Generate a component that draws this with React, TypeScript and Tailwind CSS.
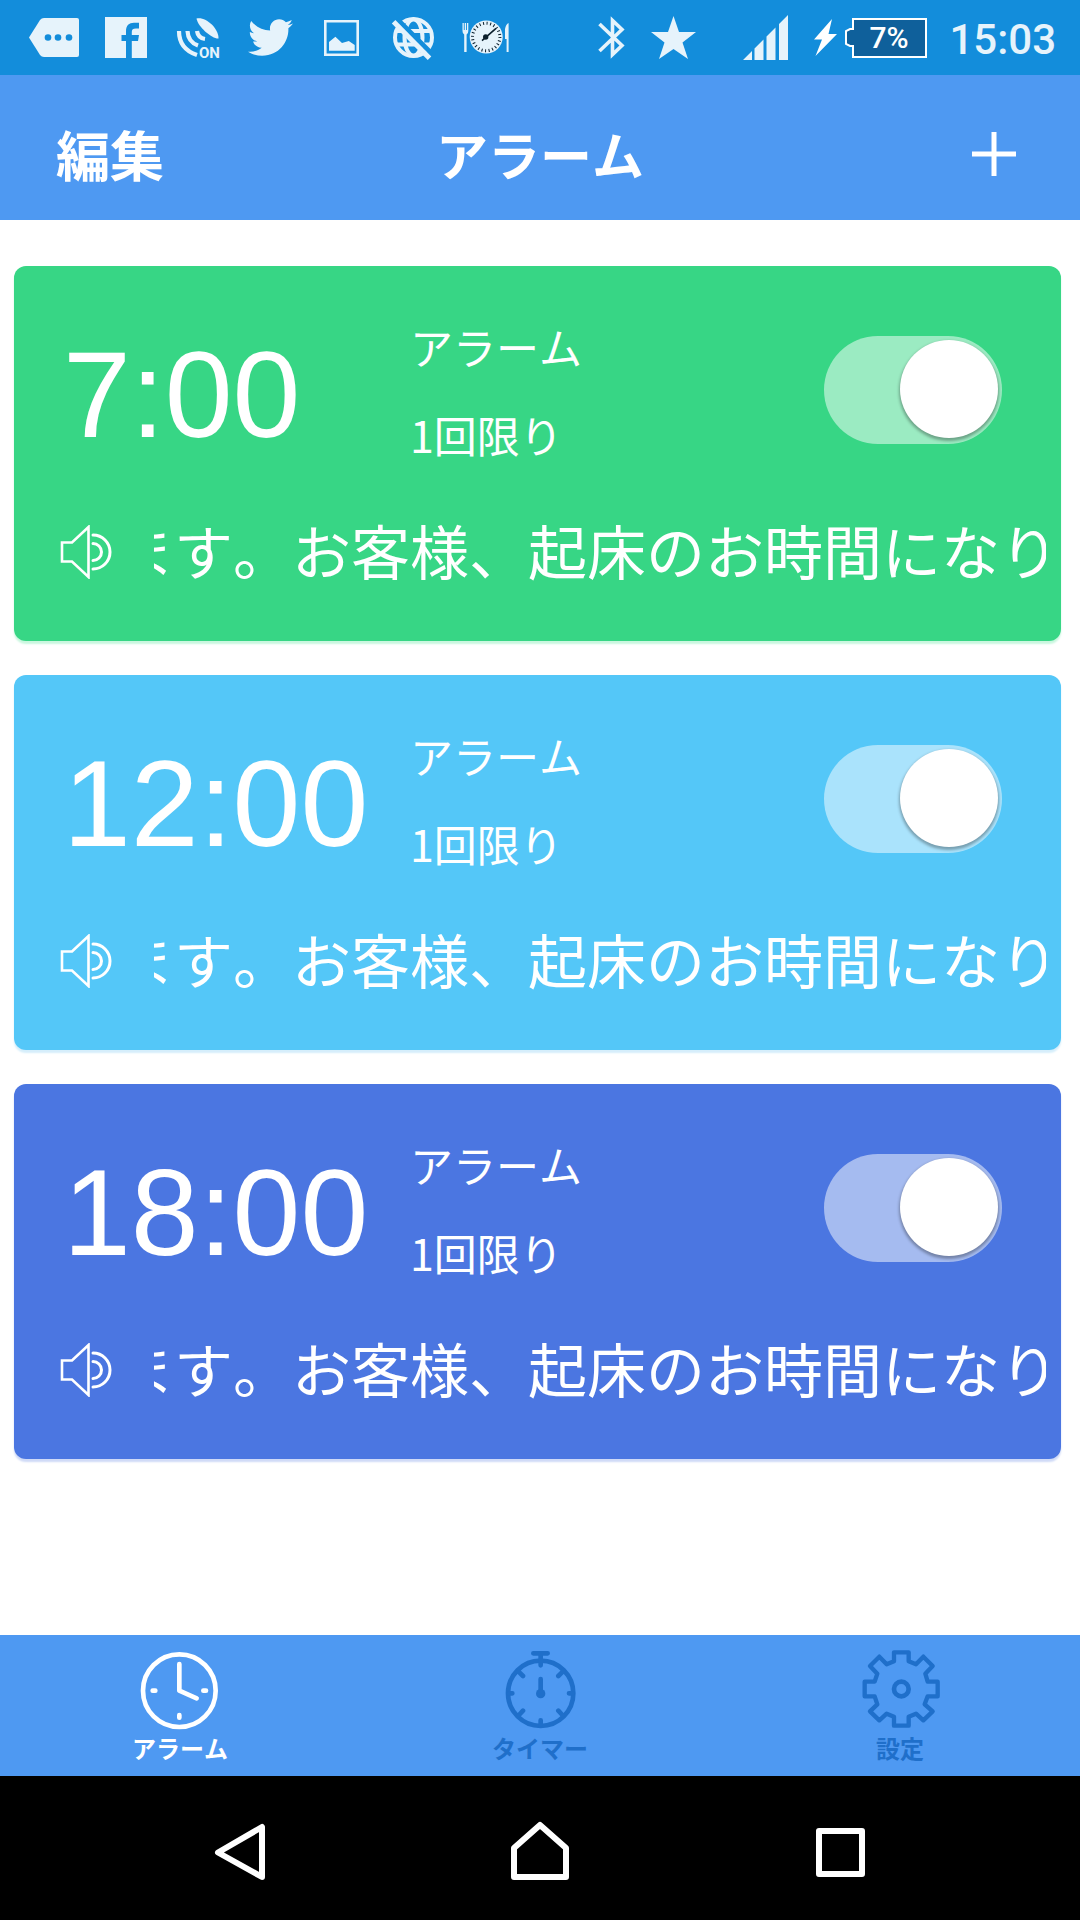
import React, { useState } from "react";
import { FaTwitter } from "react-icons/fa";

const message = "ます。お客様、起床のお時間になります。";

const initialAlarms = [
  { id: 1, time: "7:00", name: "アラーム", repeat: "1回限り", color: "bg-[#37d685] shadow-[0_3px_2px_#c9f7df]", on: true },
  { id: 2, time: "12:00", name: "アラーム", repeat: "1回限り", color: "bg-[#54c7f8] shadow-[0_3px_2px_#d5eefb]", on: true },
  { id: 3, time: "18:00", name: "アラーム", repeat: "1回限り", color: "bg-[#4b76e1] shadow-[0_3px_2px_#cfdaf7]", on: true },
];

const StatusBar = () => (
  <div className="flex h-[75px] items-center bg-[#138ddb] pr-[24px] pl-[18px] font-[Roboto,sans-serif] text-[#e6f3fb]">
    <svg className="h-[51px] w-[72px]" viewBox="0 0 72 51" fill="currentColor">
      <path d="M11 25.500 22 8Q23.500 6 26 6H59Q61 6 61 8V43Q61 45 59 45H26Q23.500 45 22 43Z" />
      <g fill="#138ddb">
        <circle cx="30" cy="25.500" r="3.300" />
        <circle cx="40" cy="25.500" r="3.300" />
        <circle cx="51" cy="25.500" r="3.300" />
      </g>
    </svg>
    <svg className="h-[51px] w-[72px]" viewBox="0 0 72 51" fill="currentColor">
      <path d="M15 5H57V46H15Z" />
      <path fill="#138ddb" d="M36 46V29H31.500V23H36V19.500C36 13.500 39 10.800 44 10.800H49V16.500H46C43 16.500 41.800 17.500 41.800 20V23H49L48 29H41.800V46Z" />
    </svg>
    <svg className="h-[51px] w-[72px]" viewBox="0 0 72 51" fill="currentColor">
      <path d="M34.500 6.500C43 4 57 16 56.500 26.500C50 27 36 15 34.500 6.500Z" />
      <g fill="none" stroke="currentColor" strokeWidth="4.200">
        <path d="M35 19Q36 26 43 27" />
        <path d="M25.500 19Q26 30 36 33.500" />
        <path d="M17 19Q17 37 35 43" />
      </g>
      <text x="37" y="46" fontSize="15" fontWeight="700">ON</text>
    </svg>
    <div className="flex w-[72px] justify-center">
      <FaTwitter size={45} />
    </div>
    <svg className="h-[51px] w-[72px]" viewBox="0 0 72 51" fill="currentColor">
      <path d="M19.300 9.300H51.700V42.700H19.300Z" fill="none" stroke="currentColor" strokeWidth="2.600" />
      <path d="M23 38.700V30L29.400 24.700 36 31 42.800 29 48.700 33V38.700Z" />
    </svg>
    <svg className="h-[51px] w-[72px]" viewBox="0 0 72 51">
      <g fill="none" stroke="currentColor" strokeWidth="4">
        <circle cx="35.500" cy="25.500" r="18.500" />
        <ellipse cx="35.500" cy="25.500" rx="9" ry="18" />
        <path d="M18 19H53M18 32.500H53" />
      </g>
      <path d="M19 7 56 44" stroke="#138ddb" strokeWidth="5" />
      <path d="M15.600 9.700 51.500 46.300" stroke="currentColor" strokeWidth="5" />
    </svg>
    <svg className="h-[51px] w-[72px]" viewBox="0 0 72 51" fill="currentColor">
      <path d="M12.500 11V19Q12.500 22 14.200 22.500V40H16.600V22.500Q18.300 22 18.300 19V11H17V18H16.100V11H14.700V18H13.800V11Z" />
      <path d="M58.600 11V40H56.600V27H55V17Q56 12 58.600 11Z" />
      <circle cx="36.200" cy="25" r="16.500" />
      <circle cx="36.200" cy="25" r="13.700" fill="none" stroke="#0a1e2c" strokeWidth="3" strokeDasharray="1 2.586" />
      <path d="M32 28.700 46 16.300" stroke="#0a1e2c" strokeWidth="1.600" />
      <circle cx="35.700" cy="25" r="2.700" fill="#0a1e2c" />
    </svg>

    <svg className="ml-auto h-[43px] w-[27px]" viewBox="0 0 27 43" fill="none" stroke="currentColor" strokeWidth="3.600">
      <path d="M1.500 8 24 29.500 14.500 38.500V4.500L24 13.500 1.500 35" />
    </svg>
    <svg className="ml-[26px] h-[43px] w-[45px]" viewBox="0 0 45 43" fill="currentColor">
      <path d="M22.500 0 28 16H45L31.500 26.500 37 43 22.500 33 8 43 13.500 26.500 0 16H17Z" />
    </svg>
    <svg className="ml-[47px] h-[45px] w-[45px]" viewBox="0 0 45 45" fill="currentColor">
      <path d="M0 45 9 36V45ZM11.500 33.500 20.500 24.500V45H11.500ZM23.500 21.500 32.500 12.500V45H23.500ZM36 9 45 0V45H36Z" />
    </svg>
    <svg className="ml-[26px] h-[37px] w-[23px] text-white" viewBox="0 0 23 37" fill="currentColor">
      <path d="M18 0 14.500 15H23L1.500 37 8 20.500H0Z" />
    </svg>
    <svg className="ml-[8px] h-[40px] w-[82px]" viewBox="0 0 82 40">
      <path d="M8 1H81V39H8V28H5L1 26V13L5 11H8Z" fill="#0f609b" stroke="#fff" strokeWidth="2" />
      <text x="44" y="30" fontSize="30" fontWeight="500" textAnchor="middle" fill="#fff">7%</text>
    </svg>
    <span className="ml-[22px] pt-[4px] text-[42px] leading-none font-medium">15:03</span>
  </div>
);

const Header = () => (
  <header className="grid h-[145px] grid-cols-[1fr_auto_1fr] items-center bg-[#4e99f2] px-[56px] pt-[12px] font-bold">
    <button type="button" className="justify-self-start text-[54px] leading-[72px]">編集</button>
    <h1 className="text-[52px] leading-[72px]">アラーム</h1>
    <button type="button" aria-label="追加" className="mr-[8px] justify-self-end">
      <svg className="h-[44px] w-[44px]" viewBox="0 0 44 44" stroke="currentColor" strokeWidth="5">
        <path d="M22 0V44M0 22H44" />
      </svg>
    </button>
  </header>
);

const SpeakerIcon = () => (
  <svg className="h-[54px] w-[54px] shrink-0" viewBox="0 0 54 54" fill="none" stroke="currentColor" strokeWidth="2.600">
    <path d="M2 17.500H12L28.500 2V52L12 36.500H2Z" />
    <path d="M33 10A17 17 0 0 1 33 44M33 18.500A8.500 8.500 0 0 1 33 35.500" strokeWidth="3" strokeLinecap="round" />
  </svg>
);

const AlarmCard = ({ alarm, onToggle }) => (
  <li className={`rounded-xl pt-[36px] pr-[15px] pb-[44px] pl-[46px] ${alarm.color}`}>
    <div className="flex items-center">
      <time className="w-[350px] pt-[10px] pl-[3px] font-['Liberation_Sans',Arial,sans-serif] text-[122px] leading-[166px]">{alarm.time}</time>
      <div className="flex-1 text-[43px] leading-[88px]">
        <p>{alarm.name}</p>
        <p>{alarm.repeat}</p>
      </div>
      <input
        type="checkbox"
        role="switch"
        aria-label={`${alarm.time} ${alarm.name}`}
        checked={alarm.on}
        onChange={onToggle}
        className="mr-[44px] flex h-[108px] w-[178px] appearance-none rounded-full bg-white/25 px-[4px] pt-[4px] before:h-[98px] before:w-[98px] before:rounded-full before:bg-white before:shadow-[0_2px_3px_1px_rgba(0,0,0,0.300)] checked:justify-end checked:bg-white/50"
      />
    </div>
    <div className="mt-[30px] mb-[1px] flex items-center">
      <SpeakerIcon />
      <div className="ml-[40px] flex-1 overflow-hidden">
        <p className="-ml-[39px] w-0 pb-[4px] text-[59px] leading-[84px] whitespace-nowrap">{message}</p>
      </div>
    </div>
  </li>
);

const ClockIcon = () => (
  <svg className="h-20 w-20" viewBox="118 60 240 240" fill="none" stroke="currentColor" strokeLinecap="round" strokeLinejoin="round">
    <circle cx="236" cy="182" r="109" strokeWidth="14" />
    <path d="M236 102V182L288 205" strokeWidth="14" />
    <path d="M156 182H164M308 182H316M236 255V263" strokeWidth="14" />
  </svg>
);

const TimerIcon = () => (
  <svg className="h-20 w-20" viewBox="121 60 240 240" fill="none" stroke="currentColor" strokeLinecap="round">
    <circle cx="243" cy="190" r="98" strokeWidth="14" />
    <path d="M221 70H264M243 72V106M243 147V190M176 124 190 138M310 124 296 138M148 190H158M328 190H338M178 255 190 242M308 255 296 242M243 271V284" strokeWidth="14" />
    <circle cx="243" cy="191" r="14" fill="currentColor" stroke="none" />
  </svg>
);

const GearIcon = () => (
  <svg className="h-20 w-20" viewBox="122 59 240 240" fill="none" stroke="currentColor" strokeWidth="13" strokeLinejoin="round">
    <path d="M224 66H268V93L290 102 312 79 340 107 318 130 325 154H355V198H325L316 222 340 243 312 270 290 250 268 259V286H224V259L202 250 180 270 152 243 174 222 166 198H136V154H166L174 130 152 107 180 79 202 102 224 93Z" />
    <circle cx="246" cy="176" r="22" strokeWidth="14" />
  </svg>
);

const tabs = [
  { id: "alarm", label: "アラーム", Icon: ClockIcon },
  { id: "timer", label: "タイマー", Icon: TimerIcon },
  { id: "settings", label: "設定", Icon: GearIcon },
];

const NavBar = () => (
  <div className="flex h-[144px] bg-black px-[90px] pt-[6px] text-white">
    <button type="button" aria-label="戻る" className="flex flex-1 items-center justify-center">
      <svg className="h-[60px] w-[60px]" viewBox="0 0 60 60" fill="none" stroke="currentColor" strokeWidth="6" strokeLinejoin="round">
        <path d="M52 6V56L8 31.500Z" />
      </svg>
    </button>
    <button type="button" aria-label="ホーム" className="flex flex-1 items-center justify-center">
      <svg className="h-[60px] w-[60px]" viewBox="0 0 60 60" fill="none" stroke="currentColor" strokeWidth="6" strokeLinejoin="round">
        <path d="M4 56V27L30 4 56 27V56Z" />
      </svg>
    </button>
    <button type="button" aria-label="履歴" className="flex flex-1 items-center justify-center">
      <svg className="h-[60px] w-[60px]" viewBox="0 0 60 60" fill="none" stroke="currentColor" strokeWidth="6" strokeLinejoin="round">
        <path d="M9 10H52V53H9Z" />
      </svg>
    </button>
  </div>
);

const App = () => {
  const [alarms, setAlarms] = useState(initialAlarms);
  const [tab, setTab] = useState("alarm");

  const toggleAlarm = (id: number) => {
    setAlarms((prev) => prev.map((a) => (a.id === id ? { ...a, on: !a.on } : a)));
  };

  return (
    <div className="flex min-h-screen flex-col bg-white font-['Noto_Sans_CJK_JP',sans-serif] text-white [font-kerning:none]">
      <StatusBar />
      <Header />
      <main className="flex-1 pt-[46px] pr-[19px] pl-[14px]">
        <ul className="flex flex-col gap-[34px]">
          {alarms.map((alarm) => (
            <AlarmCard key={alarm.id} alarm={alarm} onToggle={() => toggleAlarm(alarm.id)} />
          ))}
        </ul>
      </main>
      <nav className="flex bg-[#4e99f2]">
        {tabs.map(({ id, label, Icon }) => (
          <button
            key={id}
            type="button"
            onClick={() => setTab(id)}
            className={`flex flex-1 flex-col items-center pt-[15px] pb-[10px] text-[24px] leading-[36px] font-bold ${tab === id ? "text-white" : "text-[#1f6fca]"}`}
          >
            <Icon />
            {label}
          </button>
        ))}
      </nav>
      <NavBar />
    </div>
  );
};

export default App;
